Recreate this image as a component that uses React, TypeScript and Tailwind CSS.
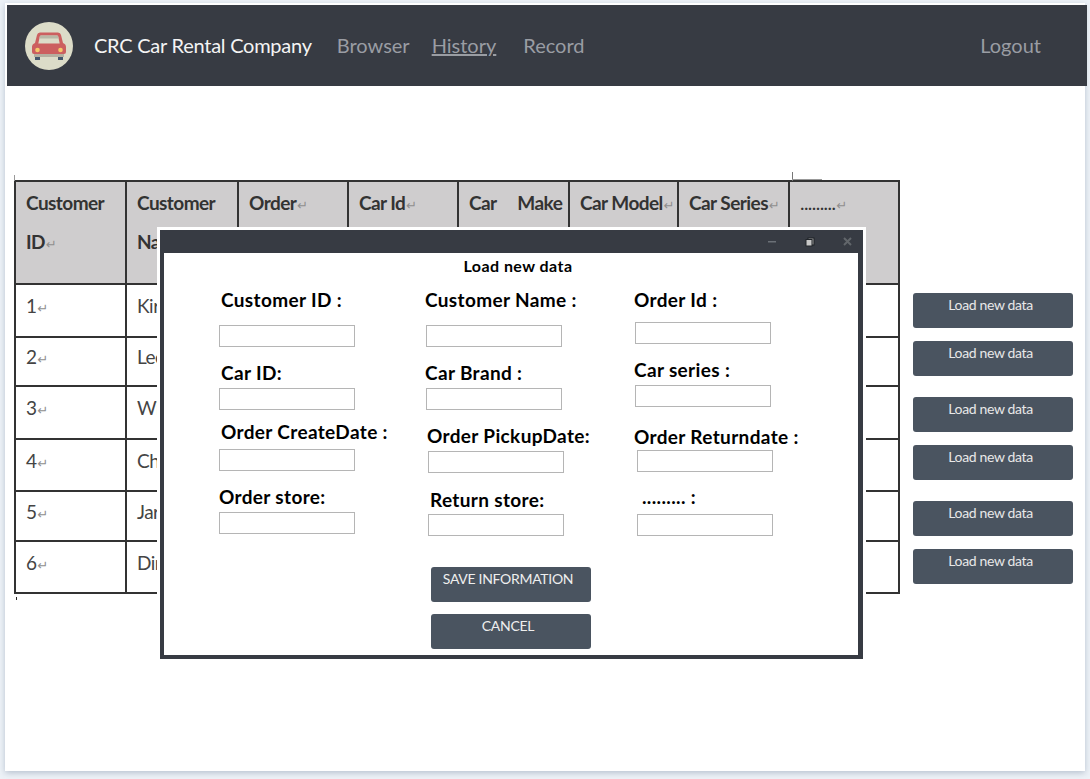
const FONT = "font-['Lato','Noto_Sans',sans-serif]";

const NAV_LINKS = [
  { label: 'Browser', className: 'ml-[25px]' },
  { label: 'History', className: 'ml-[22px] underline' },
  { label: 'Record', className: 'ml-[27px]' },
];

const ROWS = [
  { id: '1', name: 'Kir', rowClass: 'h-[53px]' },
  { id: '2', name: 'Lee', rowClass: 'h-[49px]' },
  { id: '3', name: 'Wi', rowClass: 'h-[53px]' },
  { id: '4', name: 'Ch', rowClass: 'h-[52px]' },
  { id: '5', name: 'Jar', rowClass: 'h-[50px]' },
  { id: '6', name: 'Dir', rowClass: 'h-[52px]' },
];

const SIDE_BUTTONS = ['mt-[113px]', 'mt-[13px]', 'mt-[21px]', 'mt-[13px]', 'mt-[21px]', 'mt-[13px]'];

const COLUMNS = [
  {
    className: 'ml-[55px] w-[206px]',
    fields: [
      { label: 'Customer ID :', top: 'mt-0', labelX: 'ml-[2px]', gap: 'mt-[15px]', inputX: 'ml-0' },
      { label: 'Car ID:', top: 'mt-[16px]', labelX: 'ml-[2px]', gap: 'mt-[5px]', inputX: 'ml-0' },
      { label: 'Order CreateDate :', top: 'mt-[12px]', labelX: 'ml-[2px]', gap: 'mt-[7px]', inputX: 'ml-0' },
      { label: 'Order store:', top: 'mt-[16px]', labelX: 'ml-0', gap: 'mt-[5px]', inputX: 'ml-0' },
    ],
  },
  {
    className: 'w-[209px]',
    fields: [
      { label: 'Customer Name :', top: 'mt-0', labelX: 'ml-0', gap: 'mt-[15px]', inputX: 'ml-[1px]' },
      { label: 'Car Brand :', top: 'mt-[16px]', labelX: 'ml-0', gap: 'mt-[5px]', inputX: 'ml-[1px]' },
      { label: 'Order PickupDate:', top: 'mt-[16px]', labelX: 'ml-[2px]', gap: 'mt-[5px]', inputX: 'ml-[3px]' },
      { label: 'Return store:', top: 'mt-[17px]', labelX: 'ml-[5px]', gap: 'mt-[4px]', inputX: 'ml-[3px]' },
    ],
  },
  {
    className: 'w-[200px]',
    fields: [
      { label: 'Order Id :', top: 'mt-0', labelX: 'ml-0', gap: 'mt-[12px]', inputX: 'ml-[1px]' },
      { label: 'Car series :', top: 'mt-[16px]', labelX: 'ml-0', gap: 'mt-[5px]', inputX: 'ml-[1px]' },
      { label: 'Order Returndate :', top: 'mt-[20px]', labelX: 'ml-0', gap: 'mt-[3px]', inputX: 'ml-[3px]' },
      { label: '......... :', top: 'mt-[15px]', labelX: 'ml-[8px]', gap: 'mt-[7px]', inputX: 'ml-[3px]' },
    ],
  },
];

function Ret() {
  return <span className="ml-px font-['DejaVu_Sans',sans-serif] text-[13px] font-normal tracking-normal text-[#8f8f8f]">↵</span>;
}

function CarLogo() {
  return (
    <svg viewBox="0 0 48 48" className="mt-[2px] h-12 w-12 shrink-0">
      <circle cx="24" cy="24" r="24" fill="#dcdcc8" />
      <rect x="10" y="33" width="5" height="5" fill="#44566c" />
      <rect x="33" y="33" width="5" height="5" fill="#44566c" />
      <path d="M9 32h30v3H9z" fill="#b4b0a0" />
      <path d="M15 10.500h18q2.500 0 3 2.500l2 8q3 1 3 4v5q0 2-2 2H9q-2 0-2-2v-5q0-3 3-4l2-8q.5-2.500 3-2.500z" fill="#cc5f5f" />
      <path d="M16 13.500h16q1 0 1.200 1l1.500 7H13.300l1.500-7q.2-1 1.200-1z" fill="#dcdcc8" />
      <path d="M16 13.500h16q1 0 1.200 1l.4 2H14.400l.4-2q.2-1 1.200-1z" fill="#b8b8a6" />
      <circle cx="12.500" cy="28" r="2.300" fill="#f5c86a" />
      <circle cx="35.500" cy="28" r="2.300" fill="#f5c86a" />
    </svg>
  );
}

function HeaderCell({ first, second, width }: { first: React.ReactNode; second?: React.ReactNode; width: string }) {
  return (
    <th className={`${width} border-2 border-[#333] px-[10px] pt-[1px] align-top text-left text-[19px] font-bold leading-[39px] text-[#333] tracking-[-0.55px]`}>
      <div className="whitespace-nowrap">{first}</div>
      {second && <div className="whitespace-nowrap">{second}</div>}
    </th>
  );
}

function DataTable() {
  return (
    <div className="relative w-[885px] shrink-0">
      <div className="absolute left-0 top-[-5px] h-[6px] w-px bg-[#999]" />
      <div className="absolute left-[778px] top-[-8px] h-[9px] w-px bg-[#777]" />
      <div className="absolute left-[778px] top-[-1px] h-px w-[30px] bg-[#999]" />
      <div className="absolute left-[2px] top-[417px] h-[3px] w-px bg-[#222]" />
      <table className="w-[884px] table-fixed border-collapse">
        <thead>
          <tr className="h-[103px] bg-[#cfcdce]">
            <HeaderCell width="w-[111px]" first="Customer" second={<>ID<Ret /></>} />
            <HeaderCell width="w-[112px]" first="Customer" second="Name" />
            <HeaderCell width="w-[110px]" first={<>Order<Ret /></>} />
            <HeaderCell width="w-[110px]" first={<>Car Id<Ret /></>} />
            <HeaderCell width="w-[111px]" first={<>Car <span className="ml-[17px]">Make</span></>} />
            <HeaderCell width="w-[109px]" first={<>Car Model<Ret /></>} />
            <HeaderCell width="w-[111px]" first={<>Car Series<Ret /></>} />
            <HeaderCell width="w-[110px]" first={<span className="font-normal">.........<Ret /></span>} />
          </tr>
        </thead>
        <tbody>
          {ROWS.map((row) => (
            <tr key={row.id} className={row.rowClass}>
              <td className="border-2 border-[#333] px-[10px] pb-[8px] text-[19px] tracking-[-0.5px] text-[#444]">
                {row.id}
                <Ret />
              </td>
              <td className="border-2 border-[#333] px-[10px] pb-[8px] text-[19px] tracking-[-0.5px] text-[#444]">{row.name}</td>
              <td className="border-2 border-[#333]" />
              <td className="border-2 border-[#333]" />
              <td className="border-2 border-[#333]" />
              <td className="border-2 border-[#333]" />
              <td className="border-2 border-[#333]" />
              <td className="border-2 border-[#333]" />
            </tr>
          ))}
        </tbody>
      </table>
    </div>
  );
}

function WindowControls() {
  return (
    <div className="flex h-[23px] items-center justify-end pr-[1px]">
      <svg width="90" height="12" viewBox="0 0 90 12">
        <rect x="1" y="5" width="8" height="1.500" fill="#6b7077" />
        <rect x="41" y="2" width="6" height="7" fill="#9a9a9a" stroke="#1e2227" />
        <rect x="39" y="3.500" width="6" height="6.500" fill="#c8c8c8" stroke="#22262b" />
        <path d="M77 2l7 7M84 2l-7 7" stroke="#62666b" strokeWidth="2" />
      </svg>
    </div>
  );
}

function LoadModal() {
  return (
    <div className="absolute left-[152px] top-[224px] h-[435px] w-[709px] border-[3px] border-white">
      <div className="h-full bg-[#373b43] pb-[5px] pl-[4px] pr-[5px]">
        <WindowControls />
        <div className="h-[402px] bg-white text-black">
          <h2 className="h-[37px] pl-[14px] pt-[4px] text-center text-[16px] font-bold leading-[18px] tracking-[0.45px]">Load new data</h2>
          <div className="flex">
            {COLUMNS.map((col, i) => (
              <div key={i} className={col.className}>
                {col.fields.map((f) => (
                  <div key={f.label}>
                    <label className={`block h-5 whitespace-nowrap text-[19px] font-bold leading-5 tracking-[0.35px] ${f.top} ${f.labelX}`}>
                      {f.label}
                    </label>
                    <input className={`block h-[22px] w-[136px] border border-[#b5b5b5] bg-white ${f.gap} ${f.inputX}`} />
                  </div>
                ))}
              </div>
            ))}
          </div>
          <div className="ml-[267px] mt-[31px] flex w-[160px] flex-col gap-3">
            <button className="h-[35px] rounded-[3px] bg-[#4a5460] pb-[12px] pr-[6px] text-[14px] leading-[18px] text-[#eeeeee] tracking-[-0.3px]">
              SAVE INFORMATION
            </button>
            <button className="h-[35px] rounded-[3px] bg-[#4a5460] pb-[12px] pr-[6px] text-[14px] leading-[18px] text-[#eeeeee] tracking-[-0.3px]">
              CANCEL
            </button>
          </div>
        </div>
      </div>
    </div>
  );
}

export default function App() {
  return (
    <div className={`h-screen overflow-hidden bg-[#edf2f7] pl-[5px] pt-[3px] ${FONT}`}>
      <div className="relative h-[768px] w-[1080px] bg-white p-[2px] shadow-[0_2px_6px_rgba(120,135,160,0.45)]">
        <nav className="flex h-[81px] w-[1080px] items-center bg-[#373b43] pb-[2px] pl-[18px] text-[20px]">
          <CarLogo />
          <span className="ml-[21px] tracking-[-0.25px] text-[#f4f4f4]">CRC Car Rental Company</span>
          {NAV_LINKS.map((link) => (
            <a key={link.label} className={`${link.className} text-[#9a9da3]`}>
              {link.label}
            </a>
          ))}
          <a className="ml-auto mr-[46px] text-[#9a9da3]">Logout</a>
        </nav>
        <main className="flex pl-[7px] pt-[94px]">
          <DataTable />
          <div className="ml-[14px] flex w-[160px] flex-col">
            {SIDE_BUTTONS.map((mt, i) => (
              <button
                key={i}
                className={`h-[35px] rounded-[3px] bg-[#4a5460] pb-[12px] pr-[5px] text-[14px] leading-[18px] text-[#e8e8e8] tracking-[-0.35px] ${mt}`}
              >
                Load new data
              </button>
            ))}
          </div>
        </main>
        <LoadModal />
      </div>
    </div>
  );
}
